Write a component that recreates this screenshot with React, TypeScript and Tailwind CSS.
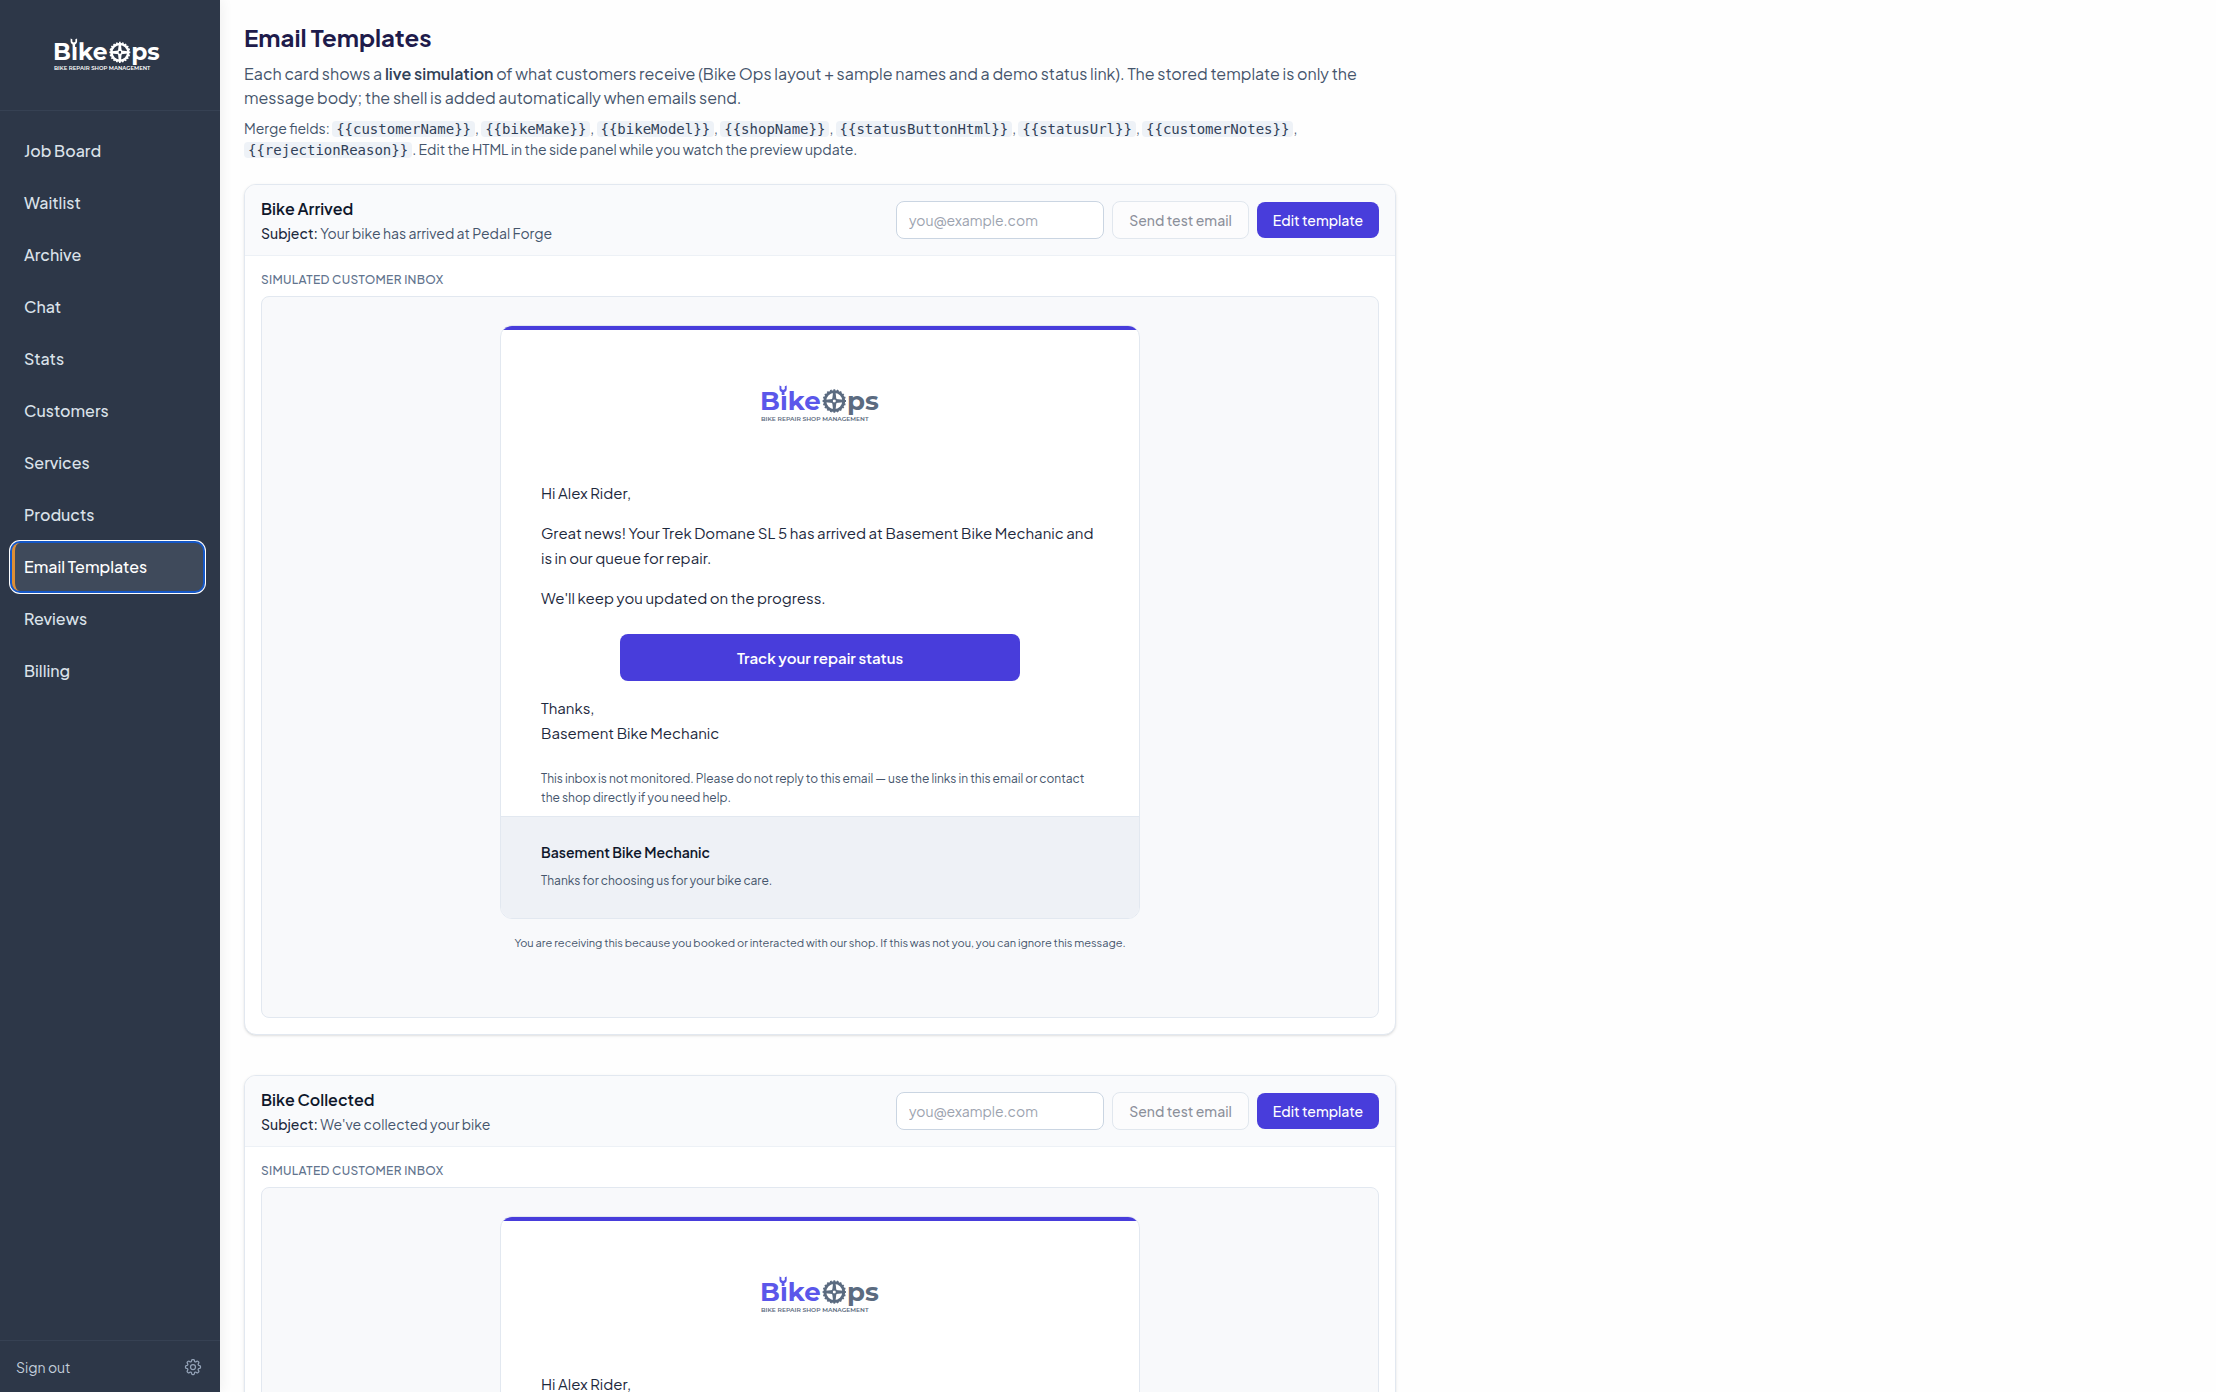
import { useState } from "react";
import { HiOutlineCog8Tooth } from "react-icons/hi2";

const NAV = [
  "Job Board",
  "Waitlist",
  "Archive",
  "Chat",
  "Stats",
  "Customers",
  "Services",
  "Products",
  "Email Templates",
  "Reviews",
  "Billing",
];

const MERGE_FIELDS = [
  "customerName",
  "bikeMake",
  "bikeModel",
  "shopName",
  "statusButtonHtml",
  "statusUrl",
  "customerNotes",
  "rejectionReason",
];

interface Template {
  id: string;
  name: string;
  subject: string;
  body: string[];
}

const TEMPLATES: Template[] = [
  {
    id: "bike-arrived",
    name: "Bike Arrived",
    subject: "Your bike has arrived at Pedal Forge",
    body: [
      "Great news! Your Trek Domane SL 5 has arrived at Basement Bike Mechanic and is in our queue for repair.",
      "We'll keep you updated on the progress.",
    ],
  },
  {
    id: "bike-collected",
    name: "Bike Collected",
    subject: "We've collected your bike",
    body: [
      "We've collected your Trek Domane SL 5 and it is on its way to Basement Bike Mechanic.",
      "We'll keep you updated on the progress.",
    ],
  },
];

const TEETH = Array.from({ length: 20 }, (_, i) => i * 18);
const SPOKES = [0, 90, 180, 270];

function Logo({ className, left, right }: { className: string; left: string; right: string }) {
  return (
    <svg viewBox="0 0 118 37" className={className} overflow="visible" role="img" aria-label="Bike Ops">
      <g fontFamily="Montserrat, 'Plus Jakarta Sans', sans-serif" fontWeight="700" fontSize="26">
        <text x="-1" y="25" fill={left}>Bıke</text>
        <text x="86" y="25" fill={right}>ps</text>
      </g>
      {/* wrench head over the i */}
      <path
        d="M18.500 0.500v3.400c0 1.700 1 2.700 2.200 3.200v2.900h2.800V7.100c1.200-.5 2.200-1.500 2.200-3.200V.5l-1.900.8v2.800l-1.700 1-1.700-1V1.300z"
        fill={left}
      />
      {/* chainring */}
      <g stroke={right} fill="none">
        <circle cx="73.300" cy="16" r="9.400" strokeWidth="2.800" />
        {TEETH.map((a) => (
          <path key={a} d="M73.300 4.300v2" strokeWidth="1.800" transform={`rotate(${a} 73.300 16)`} />
        ))}
      </g>
      {SPOKES.map((a) => (
        <path key={a} d="M72.100 7h2.400l.9 7.500h-4.200z" fill={right} transform={`rotate(${a} 73.300 16)`} />
      ))}
      <circle cx="73.300" cy="16" r="2.300" fill="none" stroke={right} strokeWidth="1.200" />
      <text x="0" y="36" fill={right} fontFamily="Montserrat, 'DejaVu Sans', sans-serif" fontWeight="600" fontSize="6">
        BIKE REPAIR SHOP MANAGEMENT
      </text>
    </svg>
  );
}

function Sidebar() {
  return (
    <aside className="z-10 flex w-[220px] shrink-0 flex-col bg-[#2d3748] shadow-[2px_0_12px_rgba(0,0,0,0.06)]">
      <div className="flex h-[111px] items-center justify-center border-b border-[#364153] pr-1.5">
        <Logo className="w-[106px]" left="#ffffff" right="#ffffff" />
      </div>
      <nav className="flex flex-1 flex-col gap-1 pt-4 pr-[17px] pl-3">
        {NAV.map((item) =>
          item === "Email Templates" ? (
            <a
              key={item}
              href="#"
              aria-current="page"
              className="flex h-12 items-center rounded-lg border-l-[3px] border-[#dd8f35] bg-[#3f4a5b] pl-[9px] text-base font-medium text-white shadow-[0_0_0_2px_#1558c8,0_0_0_3px_#ffffff]"
            >
              {item}
            </a>
          ) : (
            <a
              key={item}
              href="#"
              className="flex h-12 items-center rounded-lg pl-3 text-base font-medium text-[#dbe2ea] hover:bg-white/5"
            >
              {item}
            </a>
          )
        )}
      </nav>
      <div className="flex h-[52px] items-center justify-between border-t border-[#364153] pr-[17px] pl-4">
        <button type="button" className="text-sm text-[#c3cedb]">Sign out</button>
        <button type="button" aria-label="Settings" className="text-[#94a3b8]">
          <HiOutlineCog8Tooth size={20} />
        </button>
      </div>
    </aside>
  );
}

function EmailPreview({ body }: { body: string[] }) {
  return (
    <div className="h-[722px] overflow-hidden rounded-lg border border-slate-200 bg-[#f8f9fb] pt-7">
      <div className="mx-auto max-w-[640px] overflow-hidden rounded-xl border border-slate-200 bg-white">
        <div className="h-1 bg-[#483ddb]" />
        <div className="flex justify-center pt-[55px] pb-[58px]">
          <Logo className="w-[118px]" left="#5b57ea" right="#5b6b80" />
        </div>
        <div className="px-10 pb-[9px] text-[15px] leading-[25px] text-slate-800">
          <div className="flex flex-col gap-[15px]">
            <p>Hi Alex Rider,</p>
            {body.map((line) => (
              <p key={line}>{line}</p>
            ))}
          </div>
          <a
            href="#"
            className="mx-auto mt-6 mb-3.5 flex h-[47px] max-w-[400px] items-center justify-center rounded-lg bg-[#483ddb] font-semibold text-white"
          >
            Track your repair status
          </a>
          <p>
            Thanks,
            <br />
            Basement Bike Mechanic
          </p>
          <p className="mt-6 text-xs leading-[19px] text-slate-600">
            This inbox is not monitored. Please do not reply to this email — use the links in this email or contact the
            shop directly if you need help.
          </p>
        </div>
        <div className="border-t border-slate-200 bg-[#eef1f6] px-10 pt-6 pb-[27px]">
          <p className="text-sm leading-[22px] font-semibold text-slate-900">Basement Bike Mechanic</p>
          <p className="mt-2 text-xs leading-5 text-slate-600">Thanks for choosing us for your bike care.</p>
        </div>
      </div>
      <p className="mt-4 text-center text-[11px] leading-4 text-slate-600">
        You are receiving this because you booked or interacted with our shop. If this was not you, you can ignore this
        message.
      </p>
    </div>
  );
}

function TemplateCard({ template }: { template: Template }) {
  const [email, setEmail] = useState("");

  return (
    <section className="overflow-hidden rounded-xl border border-slate-200 bg-white shadow-sm">
      <header className="flex items-center justify-between border-b border-[#edf1f6] bg-[#f9fafc] px-4 py-3">
        <div>
          <h2 className="text-base leading-6 font-semibold text-slate-900">{template.name}</h2>
          <p className="mt-0.5 text-sm leading-5 text-slate-600">
            <span className="font-medium text-slate-800">Subject:</span> {template.subject}
          </p>
        </div>
        <div className="flex items-center gap-2">
          <input
            type="email"
            value={email}
            onChange={(e) => setEmail(e.target.value)}
            aria-label={`Test address for ${template.name}`}
            placeholder="you@example.com"
            className="h-[38px] w-52 rounded-lg border border-slate-300 bg-white px-3 text-sm placeholder:text-[#9ca3af]"
          />
          <button
            type="button"
            disabled={!email}
            className="h-[38px] w-[137px] rounded-lg border border-slate-300 bg-white text-sm font-medium text-slate-800 disabled:opacity-50"
          >
            Send test email
          </button>
          <button type="button" className="h-9 w-[122px] rounded-lg bg-[#483ddb] text-sm font-medium text-white">
            Edit template
          </button>
        </div>
      </header>
      <div className="p-4">
        <h3 className="mb-2 text-xs leading-4 font-medium tracking-wide text-slate-500 uppercase">
          Simulated customer inbox
        </h3>
        <EmailPreview body={template.body} />
      </div>
    </section>
  );
}

export default function App() {
  return (
    <div className="flex h-screen bg-[#fefefe] font-['Plus_Jakarta_Sans',Inter,sans-serif]">
      <Sidebar />
      <main className="min-w-0 flex-1 overflow-y-auto px-6 pt-6 [scrollbar-width:none]">
        <div className="max-w-6xl">
          <h1 className="text-2xl leading-[26px] font-bold text-[#1e1b4b]">Email Templates</h1>
          <p className="mt-3 text-base leading-6 text-slate-600">
            Each card shows a <strong className="font-semibold text-slate-700">live simulation</strong> of what
            customers receive (Bike Ops layout + sample names and a demo status link). The stored template is only the
            message body; the shell is added automatically when emails send.
          </p>
          <p className="mt-2 text-sm leading-5 text-slate-600">
            Merge fields:{" "}
            {MERGE_FIELDS.map((field, i) => (
              <span key={field}>
                <code className="rounded bg-[#eef2f7] px-1 font-['DejaVu_Sans_Mono',monospace] text-slate-700">
                  {`{{${field}}}`}
                </code>
                {i < MERGE_FIELDS.length - 1 ? ", " : ". "}
              </span>
            ))}
            Edit the HTML in the side panel while you watch the preview update.
          </p>
          <div className="mt-6 flex flex-col gap-10">
            {TEMPLATES.map((t) => (
              <TemplateCard key={t.id} template={t} />
            ))}
          </div>
        </div>
      </main>
    </div>
  );
}
